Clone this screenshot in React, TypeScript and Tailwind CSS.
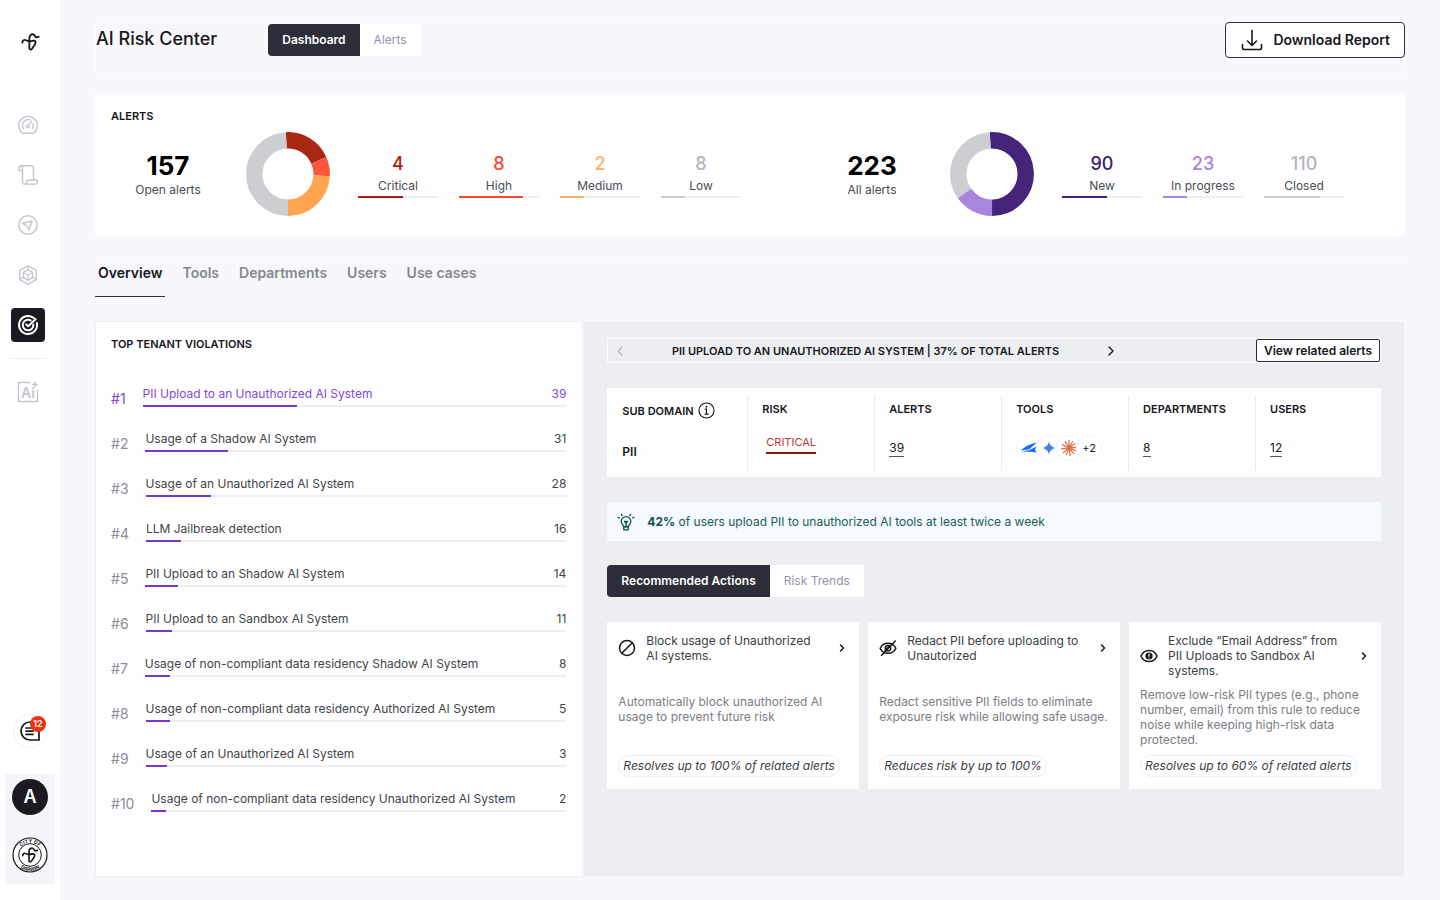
import { useState } from 'react'
import type { ReactNode } from 'react'
import clsx from 'clsx'
import { Ban, ChevronLeft, ChevronRight } from 'lucide-react'

interface Stat {
  value: number
  label: string
  percent: number
  text: string
  bar: string
}

interface Segment {
  from: number
  to: number
  color: string
}

interface Violation {
  name: string
  count: number
  percent: number
}

const openStats: Stat[] = [
  { value: 4, label: 'Critical', percent: 56, text: 'text-[#b01e10]', bar: 'bg-[#b01e10]' },
  { value: 8, label: 'High', percent: 80, text: 'text-[#f9482d]', bar: 'bg-[#f9482d]' },
  { value: 2, label: 'Medium', percent: 30, text: 'text-[#ffb066]', bar: 'bg-[#ffb066]' },
  { value: 8, label: 'Low', percent: 30, text: 'text-[#b4b5b9]', bar: 'bg-[#cccccf]' },
]

const allStats: Stat[] = [
  { value: 90, label: 'New', percent: 56, text: 'text-[#3a1d72]', bar: 'bg-[#43227a]' },
  { value: 23, label: 'In progress', percent: 30, text: 'text-[#a883e0]', bar: 'bg-[#a883e0]' },
  { value: 110, label: 'Closed', percent: 70, text: 'text-[#b4b5b9]', bar: 'bg-[#cccccf]' },
]

const openSegments: Segment[] = [
  { from: -3, to: 66, color: '#a92813' },
  { from: 66, to: 93, color: '#f9573b' },
  { from: 93, to: 180, color: '#ffa54f' },
  { from: 180, to: 357, color: '#cdced1' },
]

const allSegments: Segment[] = [
  { from: -3, to: 180, color: '#45257a' },
  { from: 180, to: 235, color: '#a886de' },
  { from: 235, to: 357, color: '#cdced1' },
]

const violations: Violation[] = [
  { name: 'PII Upload to an Unauthorized AI System', count: 39, percent: 36.5 },
  { name: 'Usage of a Shadow AI System', count: 31, percent: 19.5 },
  { name: 'Usage of an Unauthorized AI System', count: 28, percent: 15.5 },
  { name: 'LLM Jailbreak detection', count: 16, percent: 8.3 },
  { name: 'PII Upload to an Shadow AI System', count: 14, percent: 7.8 },
  { name: 'PII Upload to an Sandbox AI System', count: 11, percent: 6.2 },
  { name: 'Usage of non-compliant data residency Shadow AI System', count: 8, percent: 6 },
  { name: 'Usage of non-compliant data residency Authorized AI System', count: 5, percent: 5.7 },
  { name: 'Usage of an Unauthorized AI System', count: 3, percent: 5 },
  { name: 'Usage of non-compliant data residency Unauthorized AI System', count: 2, percent: 3.5 },
]

const sections = ['Overview', 'Tools', 'Departments', 'Users', 'Use cases']

const birdPath =
  'M4 29C4 22 10 19 15 22C22 26 30 25 37 23C43 22 46 27 42 34L34 46C30 51 25 51 25 45V17C25 7 31 3 37 4C43 6 41 13 47 13L53 11'

function BirdLogo({ className }: { className?: string }) {
  return (
    <svg viewBox="0 0 57 54" fill="none" stroke="currentColor" strokeWidth="5.5" strokeLinecap="round" strokeLinejoin="round" className={className}>
      <path d={birdPath} />
    </svg>
  )
}

function LineIcon({ children, className = 'size-5' }: { children: ReactNode; className?: string }) {
  return (
    <svg viewBox="0 0 20 20" fill="none" stroke="currentColor" strokeWidth="1.4" strokeLinecap="round" strokeLinejoin="round" className={className}>
      {children}
    </svg>
  )
}

const GaugeIcon = () => (
  <LineIcon>
    <path d="M4.6 18.2a9.3 9.3 0 1 1 10.8 0z" />
    <path d="M5.7 13.8a5.8 5.8 0 0 1 6.6-8.9M15 8.6a5.8 5.8 0 0 1-.7 5.2" />
    <path d="m13.6 6.2-3 4.2" />
    <circle cx="9.8" cy="11.4" r="1.3" />
  </LineIcon>
)

const ScrollIcon = () => (
  <LineIcon>
    <path d="M4.2 5.6H.8V3a2.1 2.1 0 0 1 2.1-2.2h10.6a2 2 0 0 1 2 2V15" />
    <path d="M2.6.8a1.8 1.8 0 0 1 1.9 1.9v14.1a2.2 2.2 0 0 0 2.2 2.3h10.4a2.2 2.2 0 0 0 2.2-2.3V15H8.9v1.8a2.2 2.2 0 0 1-2.2 2.3" />
  </LineIcon>
)

const SendIcon = () => (
  <LineIcon>
    <circle cx="10" cy="10" r="9.2" />
    <path d="M14 6 4.6 8.1l4.2 2.7L11 15z" />
  </LineIcon>
)

const CubeIcon = () => (
  <LineIcon>
    <path d="m10 .8 8.2 4.6v9.2L10 19.2l-8.2-4.6V5.4z" />
    <path d="m10 4.8 4.6 2.6v5.2L10 15.2l-4.6-2.6V7.4z" />
    <path d="m5.4 7.4 4.6 2.7 4.6-2.7M10 10.1v5.1M10 .8v4M1.8 14.6l3.6-2M18.2 14.6l-3.6-2" strokeWidth="1.1" />
  </LineIcon>
)

const TargetIcon = () => (
  <LineIcon>
    <path d="M15.8 3.1a9 9 0 1 0 3 4.800" strokeWidth="2" />
    <path d="M12.600 5.400a5.300 5.300 0 1 0 2.700 4" strokeWidth="2" />
    <path d="m8.200 9.400 2 1.900 7.400-7.200" strokeWidth="2" />
  </LineIcon>
)

const DownloadIcon = () => (
  <svg viewBox="0 0 22 22" fill="none" stroke="currentColor" strokeWidth="1.6" strokeLinecap="round" strokeLinejoin="round" className="size-[22px]">
    <path d="M11 1.5v15M6.5 12l4.5 4.5 4.5-4.5M1.5 15.5v3.2a1.8 1.8 0 0 0 1.8 1.8h15.4a1.8 1.8 0 0 0 1.8-1.8v-3.2" />
  </svg>
)

const InfoIcon = () => (
  <svg viewBox="0 0 18 18" fill="none" stroke="currentColor" strokeWidth="1.2" strokeLinecap="round" className="size-[17px]">
    <circle cx="9" cy="9" r="8" />
    <path d="M7.6 7.6H9v5M7.4 12.8h3.4" />
    <circle cx="8.9" cy="5.1" r=".4" fill="currentColor" />
  </svg>
)

const BulbIcon = () => (
  <svg viewBox="0 0 18 18" fill="none" stroke="currentColor" strokeWidth="1.3" strokeLinecap="round" strokeLinejoin="round" className="size-[18px] text-[#124f48]">
    <path d="M6.6 13.6c0-1.6-2.4-2.5-2.4-5.1a4.8 4.8 0 0 1 9.6 0c0 2.6-2.4 3.5-2.4 5.1z" />
    <path d="M6.8 16.8h4.4v-3H6.8zM9 13.4v-3M7.4 8.4 9 10.2l1.6-1.8z" />
    <path d="m5.2 2.6-.8-1.2M12.8 2.6l.8-1.2M2.4 5 1 4.4M15.6 5l1.4-.6" />
  </svg>
)

const EyeOffIcon = () => (
  <svg viewBox="0 0 18 18" fill="none" stroke="currentColor" strokeWidth="1.5" strokeLinecap="round" className="size-[18px]">
    <path d="M1.2 9.3C2.6 5.8 5.5 4.2 9 4.2s6.4 1.6 7.8 5.1c-1.4 3.5-4.3 5-7.8 5s-6.4-1.5-7.8-5z" />
    <circle cx="9" cy="9.3" r="2.7" />
    <path d="M2.5 16.2 16.3 2M6.2 11.2l5-5" />
  </svg>
)

const EyeAlertIcon = () => (
  <svg viewBox="0 0 18 18" fill="none" stroke="currentColor" strokeWidth="1.5" strokeLinecap="round" className="size-[18px]">
    <path d="M1 9c1.5-3.7 4.5-5.6 8-5.6S15.5 5.3 17 9c-1.5 3.7-4.5 5.6-8 5.6S2.5 12.7 1 9z" />
    <circle cx="9" cy="9" r="3.6" fill="currentColor" stroke="none" />
    <path d="M9 7v2.2M9 11v.1" stroke="#fff" strokeWidth="1.2" />
  </svg>
)

const actions = [
  {
    icon: <Ban className="size-[18px] rotate-90" strokeWidth={2} />,
    title: 'Block usage of Unauthorized AI systems.',
    text: 'Automatically block unauthorized AI usage to prevent future risk',
    effect: 'Resolves up to 100% of related alerts',
  },
  {
    icon: <EyeOffIcon />,
    title: 'Redact PII before uploading to Unautorized',
    text: 'Redact sensitive PII fields to eliminate exposure risk while allowing safe usage.',
    effect: 'Reduces risk by up to 100%',
  },
  {
    icon: <EyeAlertIcon />,
    title: 'Exclude “Email Address” from PII Uploads to Sandbox AI systems.',
    text: 'Remove low-risk PII types (e.g., phone number, email) from this rule to reduce noise while keeping high-risk data protected.',
    effect: 'Resolves up to 60% of related alerts',
  },
]

function Donut({ segments }: { segments: Segment[] }) {
  return (
    <svg viewBox="0 0 84 84" className="size-[84px] shrink-0">
      {segments.map(s => (
        <circle
          key={s.from}
          cx="42"
          cy="42"
          r="33.7"
          fill="none"
          stroke={s.color}
          strokeWidth="16.4"
          pathLength={360}
          strokeDasharray={`${s.to - s.from} 360`}
          transform={`rotate(${s.from - 90} 42 42)`}
        />
      ))}
    </svg>
  )
}

function AlertGroup({ total, label, segments, stats }: { total: number; label: string; segments: Segment[]; stats: Stat[] }) {
  return (
    <div className="flex items-center">
      <div className="w-[114px] text-center">
        <p className="text-[26px] leading-8 font-bold text-black">{total}</p>
        <p className="text-xs leading-4 text-[#4b4c52]">{label}</p>
      </div>
      <div className="mr-[28px] ml-[21px]">
        <Donut segments={segments} />
      </div>
      <ul className="flex gap-[21px]">
        {stats.map(s => (
          <li key={s.label} className="w-20 pt-px text-center">
            <p className={clsx('text-lg leading-6 font-medium', s.text)}>{s.value}</p>
            <p className="text-xs leading-5 text-[#4b4c52]">{s.label}</p>
            <div className="h-0.5 bg-[#efeff3]">
              <div className={clsx('h-full', s.bar)} style={{ width: `${s.percent}%` }} />
            </div>
          </li>
        ))}
      </ul>
    </div>
  )
}

function Toggle({ options }: { options: string[] }) {
  const [active, setActive] = useState(options[0])
  return (
    <div className="flex">
      {options.map(o => (
        <button
          key={o}
          type="button"
          onClick={() => setActive(o)}
          className={clsx(
            'h-8 px-3.5 text-xs',
            o === active ? 'rounded-l bg-[#2d2e39] font-semibold text-white' : 'bg-white text-[#9391b0]'
          )}
        >
          {o}
        </button>
      ))}
    </div>
  )
}

function Sidebar() {
  return (
    <aside className="flex w-[60px] shrink-0 flex-col items-center bg-white pt-[33px] pb-4">
      <a href="#" aria-label="Home" className="text-[#17171c]">
        <BirdLogo className="h-[18px] w-[19px]" />
      </a>
      <nav className="mt-[57px] mr-1 flex flex-col items-center gap-4 text-[#c6c5d0]">
        <a href="#" aria-label="Usage" className="flex size-[34px] items-center justify-center"><GaugeIcon /></a>
        <a href="#" aria-label="Policies" className="flex size-[34px] items-center justify-center"><ScrollIcon /></a>
        <a href="#" aria-label="Discover" className="flex size-[34px] items-center justify-center"><SendIcon /></a>
        <a href="#" aria-label="Models" className="flex size-[34px] items-center justify-center"><CubeIcon /></a>
        <a href="#" aria-label="Risk" className="flex size-[34px] items-center justify-center rounded-sm bg-[#1b1a22] text-white"><TargetIcon /></a>
        <div className="h-px w-9 bg-[#ededf1]" />
        <a href="#" aria-label="AI assistant" className="flex size-[34px] items-center justify-center">
          <svg viewBox="0 0 22 22" className="size-[22px]" fill="none" stroke="currentColor" strokeWidth="1.4">
            <path d="M13 1.5H1.5v19h19V9" />
            <path d="M18 .5v6M15 3.5h6" strokeWidth="1.6" />
            <text x="4" y="17" fontSize="14" fontWeight="600" fill="currentColor" stroke="none" fontFamily="Inter, sans-serif">Ai</text>
          </svg>
        </a>
      </nav>
      <button type="button" aria-label="Messages" className="relative mt-auto flex size-[34px] items-center justify-center rounded-full border border-[#f2f2f5] text-[#17171c]">
        <svg viewBox="0 0 22 22" className="size-[22px]" fill="none" stroke="currentColor" strokeWidth="1.7" strokeLinecap="round">
          <path d="M20 11v9H11a9 9 0 1 1 9-9z" strokeLinejoin="round" />
          <path d="M7 8h7M7 11.2h7M7 14.4h7" />
        </svg>
        <span className="absolute top-px right-0 flex size-4 items-center justify-center rounded-full bg-[#e8350f] text-[9px] font-semibold text-white">12</span>
      </button>
      <div className="mt-[26px] flex w-[50px] flex-col items-center gap-[22px] bg-[#f5f5f9] pt-[5px] pb-[11px]">
        <button type="button" className="size-9 rounded-full bg-[#1b1a22] text-lg font-semibold text-white">A</button>
        <a href="#" aria-label="City of Darwin" className="text-[#17171c]">
          <svg viewBox="0 0 36 36" className="size-9" fill="none" stroke="currentColor">
            <circle cx="18" cy="18" r="17" fill="#fff" strokeWidth="1.2" />
            <circle cx="18" cy="18" r="11.3" />
            <path id="seal-top" d="M5.8 18a12.2 12.2 0 0 1 24.4 0" stroke="none" />
            <path id="seal-bottom" d="M2 18a16 16 0 0 0 32 0" stroke="none" />
            <g fill="currentColor" stroke="none" fontSize="5" fontWeight="700" textAnchor="middle" fontFamily="Inter, sans-serif">
              <text><textPath href="#seal-top" startOffset="50%">CITY OF</textPath></text>
              <text><textPath href="#seal-bottom" startOffset="50%">DARWIN</textPath></text>
            </g>
            <g transform="translate(9.5 10) scale(.3)" strokeWidth="5.5" strokeLinecap="round" strokeLinejoin="round">
              <path d={birdPath} />
            </g>
          </svg>
        </a>
      </div>
    </aside>
  )
}

function ViolationList() {
  const [selected, setSelected] = useState(0)
  return (
    <section className="border border-[#f0f0f4] bg-[#fefeff] pt-[14px] pr-4 pl-[15px]">
      <h2 className="text-[11px] leading-4 font-semibold">TOP TENANT VIOLATIONS</h2>
      <ol className="mt-[34px] flex flex-col gap-6">
        {violations.map((v, i) => (
          <li key={i}>
            <button
              type="button"
              onClick={() => setSelected(i)}
              className={clsx('flex w-full items-center gap-[17px] text-left', i === selected ? 'text-[#8249d6]' : 'text-[#434449]')}
            >
              <span className={clsx('pt-1 text-sm leading-4', i !== selected && 'text-[#8b8e94]')}>#{i + 1}</span>
              <span className="block flex-1">
                <span className="flex justify-between text-xs leading-4">
                  <span>{v.name}</span>
                  <span>{v.count}</span>
                </span>
                <span className="mt-[3px] block h-0.5 bg-[#efeff3]">
                  <span className="block h-full bg-[#7636cf]" style={{ width: `${v.percent}%` }} />
                </span>
              </span>
            </button>
          </li>
        ))}
      </ol>
    </section>
  )
}

function Fact({ title, children }: { title: string; children: ReactNode }) {
  return (
    <div className="my-[7px] border-l border-[#ececf0] pl-[14px]">
      <dt className="pt-1.5 text-[11px] leading-4 font-semibold">{title}</dt>
      <dd className="mt-[18px] flex h-[26px] items-center text-xs">{children}</dd>
    </div>
  )
}

const bubble = 'flex size-[26px] items-center justify-center rounded-full border border-[#f2f2f5] bg-white'

function ToolLogos() {
  return (
    <div className="flex -space-x-1.5">
      <span className={bubble}>
        <svg viewBox="0 0 16 14" className="h-3.5 w-4 shrink-0" fill="#0a6cff">
          <path d="M16 1.5C11 2.5 5 4.500 0 9.600l8-1.400c.7-.2 1-.4 1.600-1.100z" />
          <path d="M0 10.600 8.500 9 15.500 5.500l-1.600 3.200 1.800 2.900-5.400-.9z" />
        </svg>
      </span>
      <span className={bubble}>
        <svg viewBox="0 0 14 14" className="size-3.5 shrink-0">
          <defs>
            <linearGradient id="spark" x1="0" y1="0" x2="1" y2="1">
              <stop offset="0" stopColor="#3f86ee" />
              <stop offset=".5" stopColor="#4a7be0" />
              <stop offset="1" stopColor="#5ba0dc" />
            </linearGradient>
          </defs>
          <path d="M7 0c.5 4 3 6.5 7 7-4 .5-6.5 3-7 7-.5-4-3-6.5-7-7 4-.5 6.5-3 7-7z" fill="url(#spark)" />
        </svg>
      </span>
      <span className={bubble}>
        <svg viewBox="0 0 16 16" className="size-4 shrink-0" stroke="#e0714f" strokeWidth="1.3" strokeLinecap="round">
          <path d="M8 8V.6M8 8l3.6-6.3M8 8l6-4.2M8 8l7.4-.7M8 8l6.8 2.6M8 8l4.8 5.6M8 8l1.2 7.3M8 8l-2.7 6.8M8 8l-5.700 4.700M8 8 .6 8.800M8 8 1.300 4.700M8 8 4.400 1.600" />
        </svg>
      </span>
      <span className={clsx(bubble, 'text-[11px]')}>+2</span>
    </div>
  )
}

function ViolationDetail() {
  return (
    <section className="flex flex-col border border-[#f7f7fb] bg-[#edeef2] px-[23px] pt-4 pb-8">
      <div className="flex items-center justify-between border border-white/80">
        <div className="flex w-2/3 items-center justify-between px-1">
          <button type="button" aria-label="Previous violation" className="text-[#b5b6bb]"><ChevronLeft className="size-4" /></button>
          <h2 className="text-[11px] leading-4 font-semibold">PII UPLOAD TO AN UNAUTHORIZED AI SYSTEM | 37% OF TOTAL ALERTS</h2>
          <button type="button" aria-label="Next violation"><ChevronRight className="size-4" /></button>
        </div>
        <button type="button" className="h-[23px] rounded-xs border border-[#2d2e39] bg-white px-[7px] text-xs font-semibold">View related alerts</button>
      </div>

      <dl className="mt-[25px] grid min-h-[89px] grid-cols-[140fr_127fr_127fr_127fr_127fr_126fr] bg-[#fefeff]">
        <div className="py-[14px] pl-[15px]">
          <dt className="flex items-center gap-1 text-[11px] leading-4 font-semibold">SUB DOMAIN <InfoIcon /></dt>
          <dd className="mt-[25px] text-xs leading-4 font-semibold">PII</dd>
        </div>
        <Fact title="RISK">
          <span className="mb-2 ml-1 border-b-2 border-[#8c1508] pb-0.5 text-[11px] leading-4 text-[#bb3a2c]">CRITICAL</span>
        </Fact>
        <Fact title="ALERTS"><a href="#" className="border-b border-[#55565c] leading-4">39</a></Fact>
        <Fact title="TOOLS"><ToolLogos /></Fact>
        <Fact title="DEPARTMENTS"><a href="#" className="border-b border-[#55565c] leading-4">8</a></Fact>
        <Fact title="USERS"><a href="#" className="border-b border-[#55565c] leading-4">12</a></Fact>
      </dl>

      <div className="mt-[25px] flex h-[39px] items-center gap-3 bg-[#f4faff] px-2.5 text-xs text-[#235c56]">
        <BulbIcon />
        <p><strong className="font-bold text-[#124f48]">42%</strong> of users upload PII to unauthorized AI tools at least twice a week</p>
      </div>

      <div className="mt-6">
        <Toggle options={['Recommended Actions', 'Risk Trends']} />
      </div>

      <div className="mt-[25px] grid grid-cols-3 gap-[9px]">
        {actions.map(a => (
          <article key={a.title} className="flex min-h-[167px] flex-col items-start bg-[#fefeff] px-[11px] pt-[11px] pb-3">
            <div className="flex w-full items-center">
              <span className="shrink-0">{a.icon}</span>
              <h3 className="mr-4 ml-2.5 flex-1 text-xs leading-[15px] text-[#3c3d42]">{a.title}</h3>
              <button type="button" aria-label="Open action"><ChevronRight className="size-3" strokeWidth={3} /></button>
            </div>
            <div className="flex flex-1 items-center">
              <p className="text-xs leading-[15px] text-[#7c7d82]">{a.text}</p>
            </div>
            <p className="rounded-full border border-[#f0f0f4] px-1 text-xs leading-5 text-[#3c3d42] italic">{a.effect}</p>
          </article>
        ))}
      </div>
    </section>
  )
}

export default function App() {
  const [section, setSection] = useState('Overview')

  return (
    <div className="flex min-h-screen bg-[#f7f7fc] font-['Inter',sans-serif] text-[#17171c]">
      <Sidebar />
      <main className="flex min-w-0 flex-1 flex-col px-[35px] pt-[23px] pb-[23px]">
        <header className="flex h-[50px] items-start border border-white/80">
          <h1 className="text-lg leading-[30px] font-medium">AI Risk Center</h1>
          <div className="ml-[51px]">
            <Toggle options={['Dashboard', 'Alerts']} />
          </div>
          <button type="button" className="-mt-0.5 -mr-px ml-auto flex h-9 items-center gap-2.5 rounded border border-[#2d2e39] bg-white pr-[14px] pl-[15px] text-sm font-semibold">
            <DownloadIcon />
            Download Report
          </button>
        </header>

        <section className="mt-5 bg-[#fefeff] px-4 pt-[15px] pb-5">
          <h2 className="text-[11px] leading-4 font-semibold">ALERTS</h2>
          <div className="mt-2 grid grid-cols-[704fr_574fr]">
            <AlertGroup total={157} label="Open alerts" segments={openSegments} stats={openStats} />
            <AlertGroup total={223} label="All alerts" segments={allSegments} stats={allStats} />
          </div>
        </section>

        <nav className="mt-[25px] flex gap-3.5 border-t border-white/80">
          {sections.map(s => (
            <button
              key={s}
              type="button"
              onClick={() => setSection(s)}
              className={clsx(
                'h-[35px] border-b px-[3px] pb-3 text-sm font-semibold',
                s === section ? 'border-[#2d2e39]' : 'border-transparent text-[#85888d]'
              )}
            >
              {s}
            </button>
          ))}
        </nav>

        <div className="mt-6 grid flex-1 grid-cols-[488fr_821fr]">
          <ViolationList />
          <ViolationDetail />
        </div>
      </main>
    </div>
  )
}
